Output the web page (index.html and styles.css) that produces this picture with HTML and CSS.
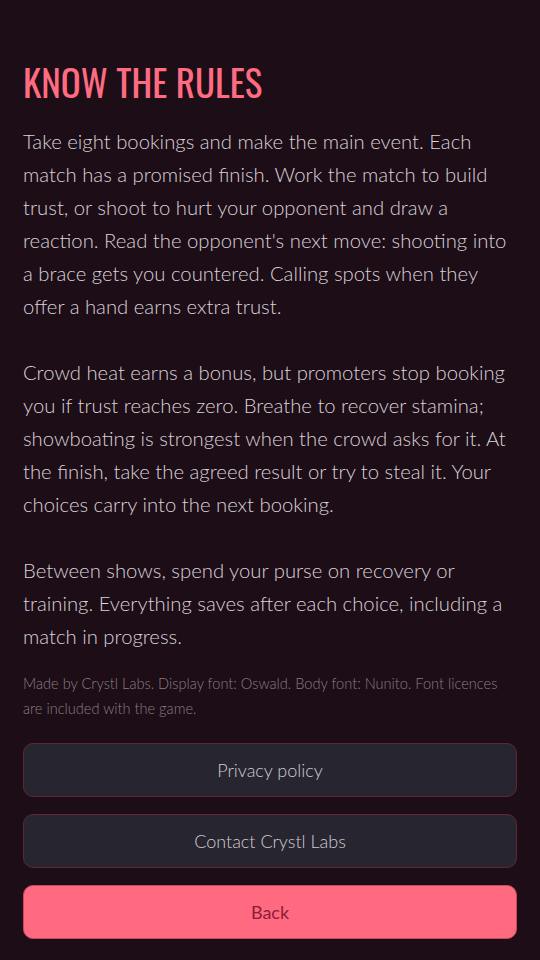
FILE: index.html
```html
<!DOCTYPE html>
<html lang="en">
<head>
  <meta charset="UTF-8">
  <meta name="viewport" content="width=device-width, initial-scale=1.0">
  <title>Know the rules</title>
  <link rel="stylesheet" href="styles.css">
</head>
<body>
  <div class="screen">
    <h1>Know the rules</h1>
    <p>
      Take eight bookings and make the main event. Each match has a promised finish. Work the match to build trust, or shoot to hurt your opponent and draw a reaction. Read the opponent's next move: shooting into a brace gets you countered. Calling spots when they offer a hand earns extra trust.
    </p>
    <p>
      Crowd heat earns a bonus, but promoters stop booking you if trust reaches zero. Breathe to recover stamina; showboating is strongest when the crowd asks for it. At the finish, take the agreed result or try to steal it. Your choices carry into the next booking.
    </p>
    <p>
      Between shows, spend your purse on recovery or training. Everything saves after each choice, including a match in progress.
    </p>
    <div class="credits">Made by Crystl Labs. Display font: Oswald. Body font: Nunito. Font licences are included with the game.</div>
    <div class="button-list">
      <button class="link">Privacy policy</button>
      <button class="link">Contact Crystl Labs</button>
      <button class="back">Back</button>
    </div>
  </div>
</body>
</html>
```

FILE: styles.css
```css
body {
  margin: 0;
  padding: 0;
  background: #1c0d17;
  font-family: 'Lato Light', 'Lato', sans-serif;
  font-weight: 300;
  color: #dad1d8;
}
.screen {
  padding: 60px 23px 20px;
}
h1 {
  font-family: 'Oswald', 'Liberation Sans Narrow', 'DejaVu Sans Condensed', sans-serif;
  font-weight: 400;
  font-size: 37px;
  line-height: 44px;
  color: #ff6b81;
  text-transform: uppercase;
  margin: 0 0 21px;
}
p {
  font-size: 20.3px;
  line-height: 33px;
  margin: 0 0 33px;
}
p:last-of-type {
  margin-bottom: 18px;
}
.credits {
  font-size: 14.6px;
  line-height: 25px;
  color: #8a7e87;
  margin-bottom: 22px;
}
.button-list {
  display: flex;
  flex-direction: column;
  gap: 17px;
}
button {
  height: 54px;
  font-family: inherit;
  font-weight: 300;
  font-size: 18px;
  border-radius: 10px;
  cursor: pointer;
}
.link {
  background: #262530;
  color: #d2cbd0;
  border: 1px solid #5e2737;
}
.back {
  background: #ff6a80;
  color: #8c1d38;
  font-family: 'Lato', sans-serif;
  font-weight: 400;
  border: 1px solid #c84a62;
}
```
